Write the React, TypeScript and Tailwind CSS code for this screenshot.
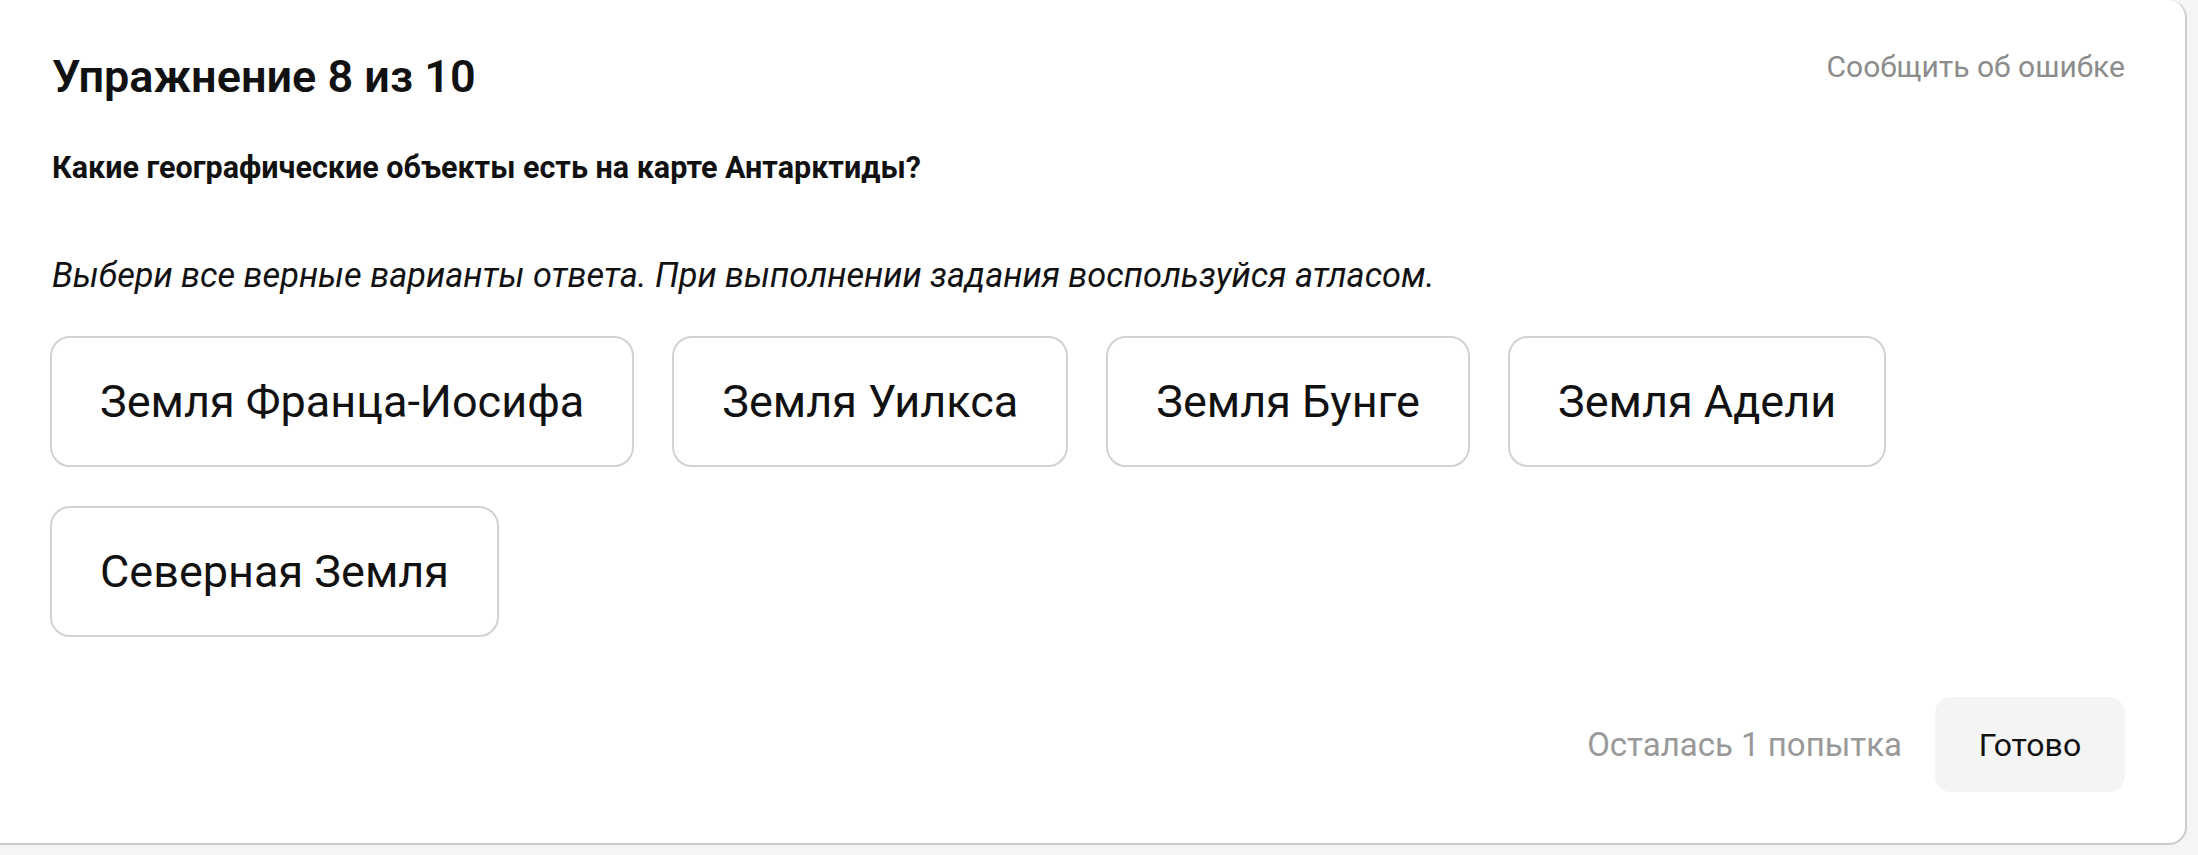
import React from "react";

const OPTIONS = [
    "Земля Франца-Иосифа",
    "Земля Уилкса",
    "Земля Бунге",
    "Земля Адели",
    "Северная Земля",
];

const App: React.FC = () => {
    return (
        <div
            className="w-full h-[855px] bg-[#f5f5f5] pr-[11px] pb-[10px]"
            style={{ fontFamily: "Roboto, 'Noto Sans', sans-serif" }}
        >
            <div className="h-full bg-white border-r-2 border-b-2 border-[#cccccc] rounded-br-[18px] rounded-tr-[18px] pl-[50px] pr-[60px] flex flex-col text-[#111111]">
                <div className="flex justify-between items-start pt-[49px]">
                    <h1 className="text-[45px] leading-[56px] font-semibold pl-[2px]">
                        Упражнение 8 из 10
                    </h1>
                    <button className="text-[30px] leading-[40px] text-[#8c8c8c] mt-[-2px]">
                        Сообщить об ошибке
                    </button>
                </div>
                <p className="mt-[43px] text-[30.5px] leading-[40px] font-bold pl-[2px]">
                    Какие географические объекты есть на карте Антарктиды?
                </p>
                <p className="mt-[65px] text-[34.3px] leading-[44px] italic pl-[2px]">
                    Выбери все верные варианты ответа. При выполнении задания воспользуйся атласом.
                </p>
                <div className="mt-[39px] flex flex-wrap gap-x-[38px] gap-y-[39px]">
                    {OPTIONS.map((o) => (
                        <button
                            key={o}
                            className="h-[131px] px-[48px] border-2 border-[#d2d2d2] rounded-[20px] bg-white text-[45px]"
                        >
                            {o}
                        </button>
                    ))}
                </div>
                <div className="mt-[60px] flex justify-end items-center gap-[33px]">
                    <span className="text-[33px] text-[#999999]">Осталась 1 попытка</span>
                    <button className="h-[95px] w-[190px] bg-[#f4f4f4] rounded-[16px] text-[32px]">
                        Готово
                    </button>
                </div>
            </div>
        </div>
    );
};

export default App;
